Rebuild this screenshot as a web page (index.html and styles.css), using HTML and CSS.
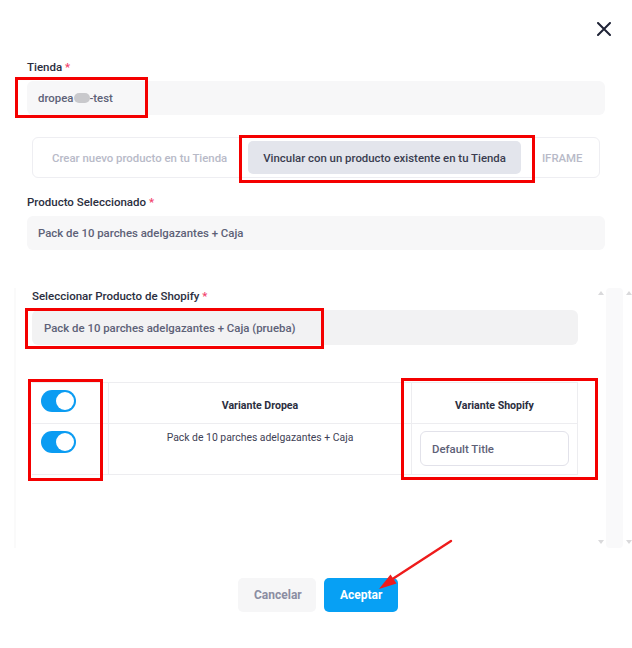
FILE: index.html
```html
<!DOCTYPE html>
<html lang="es">
<head>
<meta charset="utf-8">
<title>Vincular producto</title>
<link rel="stylesheet" href="styles.css">
</head>
<body>
<div class="modal">
  <div class="topbar">
    <button class="close" aria-label="Cerrar">
      <svg width="14" height="14" viewBox="0 0 14 14"><path d="M1 1 L13 13 M13 1 L1 13" stroke="#1f2336" stroke-width="2" stroke-linecap="round" fill="none"/></svg>
    </button>
  </div>

  <div class="form">
    <div class="label">Tienda <span class="req">*</span></div>
    <div class="input">dropea<span class="blur"></span>-test</div>

    <div class="tabs">
      <div class="tab">Crear nuevo producto en tu Tienda</div>
      <div class="tab active">Vincular con un producto existente en tu Tienda</div>
      <div class="tab">IFRAME</div>
    </div>

    <div class="label">Producto Seleccionado <span class="req">*</span></div>
    <div class="input">Pack de 10 parches adelgazantes + Caja</div>
  </div>

  <div class="scroll">
    <div class="scroll-content">
      <div class="label">Seleccionar Producto de Shopify <span class="req">*</span></div>
      <div class="input input-dark">Pack de 10 parches adelgazantes + Caja (prueba)</div>

      <div class="table">
        <div class="cell cell-toggle"><span class="toggle"><span class="knob"></span></span></div>
        <div class="cell cell-head">Variante Dropea</div>
        <div class="cell cell-head">Variante Shopify</div>
        <div class="cell cell-toggle row2"><span class="toggle"><span class="knob"></span></span></div>
        <div class="cell cell-body row2">Pack de 10 parches adelgazantes + Caja</div>
        <div class="cell cell-input row2"><div class="select">Default Title</div></div>
      </div>
    </div>
    <div class="bar"><span class="tri up"></span><span class="tri down"></span></div>
    <div class="strip"></div>
    <div class="bar outer"><span class="tri up"></span><span class="tri down"></span></div>
  </div>

  <div class="actions">
    <button class="btn btn-cancel">Cancelar</button>
    <button class="btn btn-ok">Aceptar</button>
  </div>
</div>

<div class="mark m1"></div>
<div class="mark m2"></div>
<div class="mark m3"></div>
<div class="mark m4"></div>
<div class="mark m5"></div>
<svg class="arrow" width="632" height="648" viewBox="0 0 632 648">
  <line x1="451" y1="541" x2="391" y2="580" stroke="#ee1b1b" stroke-width="2.4" stroke-linecap="round"/>
  <polygon points="379,589 390.5,574.5 396.5,583.5" fill="#ee1b1b"/>
</svg>
</body>
</html>
```

FILE: styles.css
```css
* { box-sizing: border-box; }
html, body { margin: 0; padding: 0; background: #ffffff; }
body {
  font-family: Roboto, "Noto Sans", Arial, sans-serif;
  width: 632px;
  height: 648px;
  overflow: hidden;
  position: relative;
}
.modal { width: 632px; }
.topbar {
  height: 60px;
  padding: 22px 21px 0 0;
  display: flex;
  justify-content: flex-end;
}
.close {
  border: 0;
  background: transparent;
  padding: 0;
  width: 14px;
  height: 14px;
  display: block;
}
.close svg { display: block; }
.form { padding: 0 27px; }
.label {
  font-size: 11.5px;
  line-height: 14px;
  font-weight: 500;
  color: #2b2e40;
  margin-bottom: 7px;
}
.req { color: #f2416b; }
.input {
  height: 34px;
  background: #f7f7f8;
  border-radius: 6px;
  padding: 0 11px;
  font-size: 11.4px;
  font-weight: 500;
  color: #5d6177;
  display: flex;
  align-items: center;
}
.blur {
  display: inline-block;
  width: 16px;
  height: 10px;
  border-radius: 5px;
  background: #c9c9cc;
  margin: 0 -1px 0 1px;
  filter: blur(0.6px);
}
.tabs {
  margin: 22px 5px 17px;
  height: 41px;
  border: 1px solid #eeeef2;
  border-radius: 6px;
  padding: 3px;
  display: flex;
  gap: 5px;
}
.tab {
  padding: 0 16px;
  display: flex;
  align-items: center;
  font-size: 11.4px;
  font-weight: 500;
  color: #b8bac8;
  border-radius: 5px;
  white-space: nowrap;
}
.tab.active { background: #e3e5ec; color: #3a3d50; padding: 0 15px; }

.scroll {
  margin-top: 38px;
  margin-left: 14px;
  height: 260px;
  display: flex;
}
.scroll-content {
  flex: 1;
  border-left: 2px solid #fafafa;
  padding: 1px 18px 0 16px;
}
.input-dark { background: #f2f2f3; height: 35px; padding: 0 12px; }
.bar {
  width: 10px;
  position: relative;
}
.tri {
  position: absolute;
  left: 2px;
  width: 0;
  height: 0;
  border-left: 3px solid transparent;
  border-right: 3px solid transparent;
}
.tri.up { top: 3px; border-bottom: 4px solid #d9d9db; }
.tri.down { bottom: 4px; border-top: 4px solid #d9d9db; }
.strip { width: 17px; background: #f9f9fa; border-radius: 4px; }
.bar.outer { width: 9px; }
.bar.outer .tri { left: 3px; }

.table {
  margin-top: 37px;
  display: grid;
  grid-template-columns: 76px 303px 1fr;
  grid-template-rows: 40px 51px;
  border-top: 1px solid #ededf0;
  border-bottom: 1px solid #ededf0;
  border-right: 1px solid #ededf0;
}
.cell { border-left: 1px solid #ededf0; }
.cell-toggle { border-left: 0; padding: 7px 9px; }
.row2 { border-top: 1px solid #ededf0; }
.cell-head {
  font-size: 10.6px;
  font-weight: 700;
  color: #2b2e40;
  text-align: center;
  padding-top: 16px;
  line-height: 13px;
}
.cell-body {
  font-size: 10.4px;
  color: #3e4155;
  text-align: center;
  padding-top: 7px;
  line-height: 14px;
}
.cell-input { padding: 7px 8px; }
.select {
  height: 35px;
  border: 1px solid #e2e2ea;
  border-radius: 6px;
  padding: 0 11px;
  display: flex;
  align-items: center;
  font-size: 11.4px;
  font-weight: 500;
  color: #5d6177;
}
.toggle {
  display: block;
  width: 35px;
  height: 22px;
  border-radius: 11px;
  background: #0b9cf2;
  position: relative;
}
.knob {
  position: absolute;
  right: 2px;
  top: 2px;
  width: 18px;
  height: 18px;
  border-radius: 50%;
  background: #ffffff;
}

.actions {
  margin-top: 30px;
  display: flex;
  justify-content: center;
  gap: 8px;
  padding-left: 4px;
}
.btn {
  height: 34px;
  border: 0;
  border-radius: 5px;
  font-family: inherit;
  font-size: 12px;
  font-weight: 700;
  padding: 0 16px;
}
.btn-cancel { background: #f6f6f7; color: #8b8da2; width: 78px; }
.btn-ok { background: #07a0f4; color: #ffffff; width: 74px; }

.mark {
  position: absolute;
  border: 3px solid #f40000;
  pointer-events: none;
}
.m1 { left: 15px; top: 77px; width: 133px; height: 41px; }
.m2 { left: 239px; top: 135px; width: 296px; height: 48px; }
.m3 { left: 25px; top: 308px; width: 299px; height: 41px; }
.m4 { left: 28px; top: 379px; width: 75px; height: 102px; }
.m5 { left: 401px; top: 378px; width: 197px; height: 102px; }
.arrow { position: absolute; left: 0; top: 0; pointer-events: none; }
```
